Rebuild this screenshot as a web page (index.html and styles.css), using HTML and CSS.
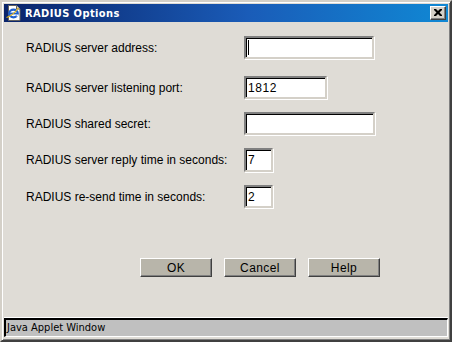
FILE: index.html
```html
<!DOCTYPE html>
<html>
<head>
<meta charset="utf-8">
<link rel="stylesheet" href="styles.css">
</head>
<body>
<div class="window">
  <div class="titlebar">
    <svg class="app-icon" width="16" height="16" viewBox="0 0 16 16">
      <path d="M2.5 0.5h8l3.5 3.5v11.5h-11.5z" fill="#fff" stroke="#606060" stroke-width="1"/>
      <path d="M10.5 0.5v3.5h3.5" fill="#d4d0c8" stroke="#606060" stroke-width="1"/>
      <ellipse cx="7.5" cy="8.5" rx="4.3" ry="3.8" fill="none" stroke="#1c5fd0" stroke-width="2.2"/>
      <path d="M3.4 8.5h8.2" stroke="#1c5fd0" stroke-width="1.8"/>
      <path d="M10.5 10.5h2" stroke="#fff" stroke-width="2"/>
      <path d="M0.5 12.5c3.5-1 8.5-5 12-9.5" fill="none" stroke="#e8b818" stroke-width="1.2"/>
    </svg>
    <span class="title">RADIUS Options</span>
    <span class="close-btn">
      <svg width="8" height="7" viewBox="0 0 8 7"><path d="M0 0h2l2 2 2-2h2v1l-2.5 2.5 2.5 2.5v1h-2l-2-2-2 2h-2v-1l2.5-2.5-2.5-2.5z" fill="#000"/></svg>
    </span>
  </div>
  <div class="content">
    <div class="form">
      <div class="row row-first">
        <label class="label">RADIUS server address:</label>
        <div class="field field-wide"><span class="caret"></span></div>
      </div>
      <div class="row">
        <label class="label">RADIUS server listening port:</label>
        <div class="field field-mid">1812</div>
      </div>
      <div class="row">
        <label class="label">RADIUS shared secret:</label>
        <div class="field field-wide2"></div>
      </div>
      <div class="row row-tall">
        <label class="label">RADIUS server reply time in seconds:</label>
        <div class="field field-small">7</div>
      </div>
      <div class="row">
        <label class="label">RADIUS re-send time in seconds:</label>
        <div class="field field-small">2</div>
      </div>
    </div>
    <div class="buttons">
      <button class="btn">OK</button>
      <button class="btn">Cancel</button>
      <button class="btn">Help</button>
    </div>
  </div>
  <div class="statusbar">Java Applet Window</div>
</div>
</body>
</html>
```
FILE: styles.css
```css
* { box-sizing: border-box; }
html, body { margin: 0; padding: 0; }
body { width: 452px; height: 342px; overflow: hidden; background: #d4d0c8; }

.window {
  width: 452px;
  height: 342px;
  background: #dfdcd6;
  border-style: solid;
  border-width: 2px;
  border-color: #d4d0c8 #404040 #404040 #d4d0c8;
  box-shadow: inset 1px 1px 0 #ffffff, inset -1px -1px 0 #808080;
  padding: 2px 2px 3px 2px;
  display: flex;
  flex-direction: column;
  font-family: "Liberation Sans", Arial, sans-serif;
}

.titlebar {
  height: 18px;
  background: linear-gradient(to right, #0a246a 0%, #1a5cb8 55%, #1088d4 100%);
  display: flex;
  align-items: center;
  padding: 0 2px 0 2px;
  flex: none;
}
.app-icon { flex: none; margin-right: 3px; }
.title {
  color: #fff;
  font-family: "DejaVu Sans Condensed", "DejaVu Sans", sans-serif;
  font-weight: bold;
  font-size: 11px;
  letter-spacing: 0.4px;
  flex: 1;
}
.close-btn {
  width: 16px;
  height: 14px;
  background: #d4d0c8;
  border-style: solid;
  border-width: 1px;
  border-color: #ffffff #404040 #404040 #ffffff;
  box-shadow: inset -1px -1px 0 #808080;
  display: flex;
  align-items: center;
  justify-content: center;
  padding-bottom: 1px;
}

.content {
  flex: 1;
  padding: 14px 0 0 22px;
  display: flex;
  flex-direction: column;
}

.form {
  display: grid;
  grid-template-columns: 218px auto;
  row-gap: 13px;
}
.row { display: contents; }
.label {
  font-size: 12px;
  color: #000;
  align-self: center;
}
.row-first .field { margin-bottom: 4px; }
.row-first .label { margin-bottom: 4px; }

.field {
  height: 23px;
  background: #fff;
  border-style: solid;
  border-width: 2px;
  border-color: #808080 #d4d0c8 #d4d0c8 #808080;
  box-shadow: inset 1px 1px 0 #000, 1px 1px 0 #ffffff;
  font-size: 12px;
  color: #000;
  padding: 3px 0 0 2px;
  letter-spacing: 0.6px;
  position: relative;
}
.row-tall .field { height: 24px; }
.field-wide { width: 130px; }
.field-wide2 { width: 131px; }
.field-mid { width: 83px; }
.field-small { width: 29px; }
.caret {
  position: absolute;
  left: 2px;
  top: 2px;
  width: 1px;
  height: 15px;
  background: #000;
}

.buttons {
  display: flex;
  gap: 12px;
  margin: 50px 0 0 114px;
}
.btn {
  width: 72px;
  height: 19px;
  background: #b8b5aa;
  border-style: solid;
  border-width: 1px;
  border-color: #ffffff #404040 #404040 #ffffff;
  box-shadow: inset -1px -1px 0 #808080;
  font-family: "Liberation Sans", Arial, sans-serif;
  font-size: 12px;
  color: #000;
  padding: 0;
  letter-spacing: 0.4px;
}

.statusbar {
  flex: none;
  height: 19px;
  background: #c0c0c0;
  border-style: solid;
  border-width: 2px 1px 1px 2px;
  border-color: #000 #fff #fff #000;
  box-shadow: 0 -1px 0 #ffffff;
  font-family: "DejaVu Sans Condensed", "DejaVu Sans", sans-serif;
  font-size: 11px;
  padding: 1px 0 0 1px;
  color: #000;
}
```
